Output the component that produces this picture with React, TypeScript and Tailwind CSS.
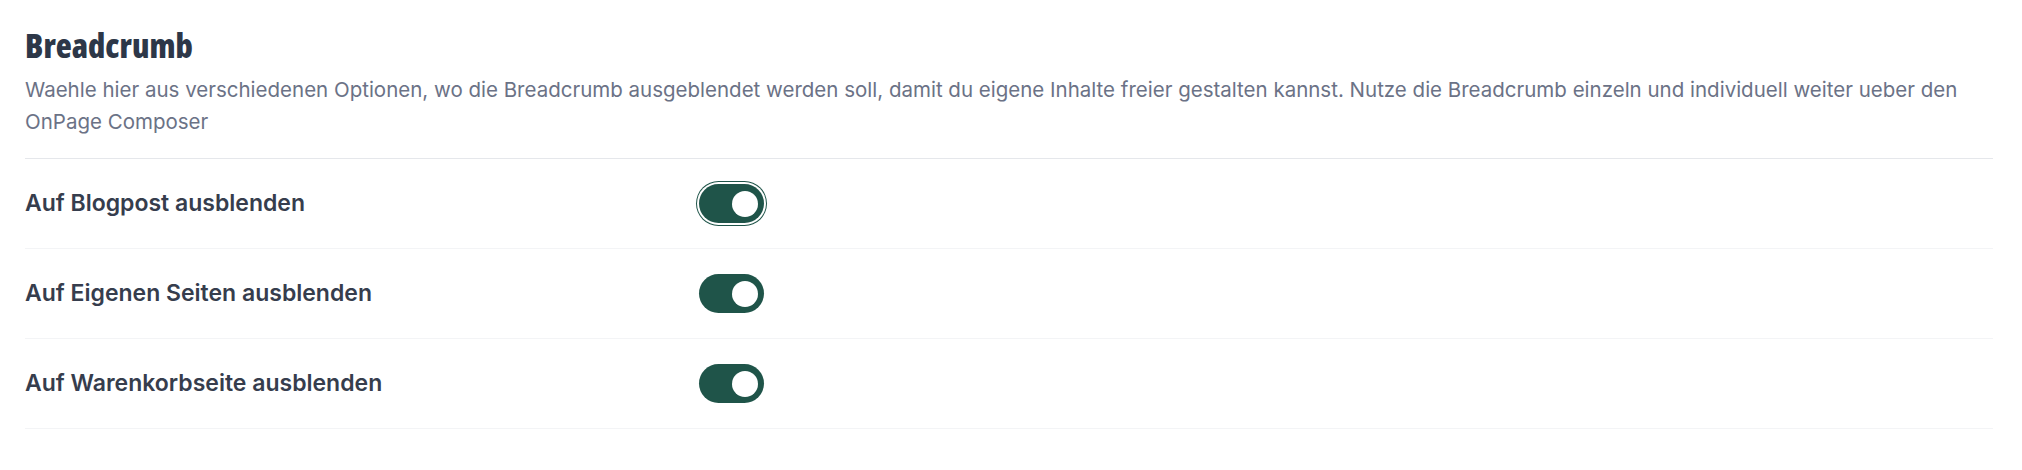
import { useState } from "react";

const rows = [
  { id: "blog", label: "Auf Blogpost ausblenden", focused: true },
  { id: "pages", label: "Auf Eigenen Seiten ausblenden", focused: false },
  { id: "cart", label: "Auf Warenkorbseite ausblenden", focused: false },
];

function Toggle({ on, focused, onClick }: { on: boolean; focused: boolean; onClick: () => void }) {
  return (
    <button
      type="button"
      onClick={onClick}
      className={`relative flex h-[39px] w-[65px] items-center rounded-full px-[6px] ${
        on ? "justify-end bg-[#1f5449]" : "justify-start bg-gray-300"
      } ${focused ? "ring-1 ring-[#1f5449] ring-offset-2" : ""}`}
    >
      <span className="block h-[26px] w-[26px] rounded-full bg-white" />
    </button>
  );
}

export default function App() {
  const [values, setValues] = useState<Record<string, boolean>>({ blog: true, pages: true, cart: true });

  return (
    <div className="min-h-[470px] bg-white pl-[25px] pr-[29px] pt-[26px] font-['Inter',sans-serif]">
      <h2 className="font-['Open_Sans',sans-serif] text-[33px] font-extrabold font-stretch-condensed leading-[40px] text-[#2d3748]">
        Breadcrumb
      </h2>
      <p className="mt-[8px] pb-[20px] text-[20.5px] leading-[32px] text-[#6b7286]">
        Waehle hier aus verschiedenen Optionen, wo die Breadcrumb ausgeblendet werden soll, damit du eigene Inhalte
        freier gestalten kannst. Nutze die Breadcrumb einzeln und individuell weiter ueber den OnPage Composer
      </p>
      <div className="border-t border-gray-200">
        {rows.map((row) => (
          <div key={row.id} className="flex h-[90px] items-center border-b border-gray-100">
            <span className="w-[674px] text-[23px] font-semibold text-[#363d4d]">{row.label}</span>
            <Toggle
              on={values[row.id]}
              focused={row.focused}
              onClick={() => setValues((v) => ({ ...v, [row.id]: !v[row.id] }))}
            />
          </div>
        ))}
      </div>
    </div>
  );
}
